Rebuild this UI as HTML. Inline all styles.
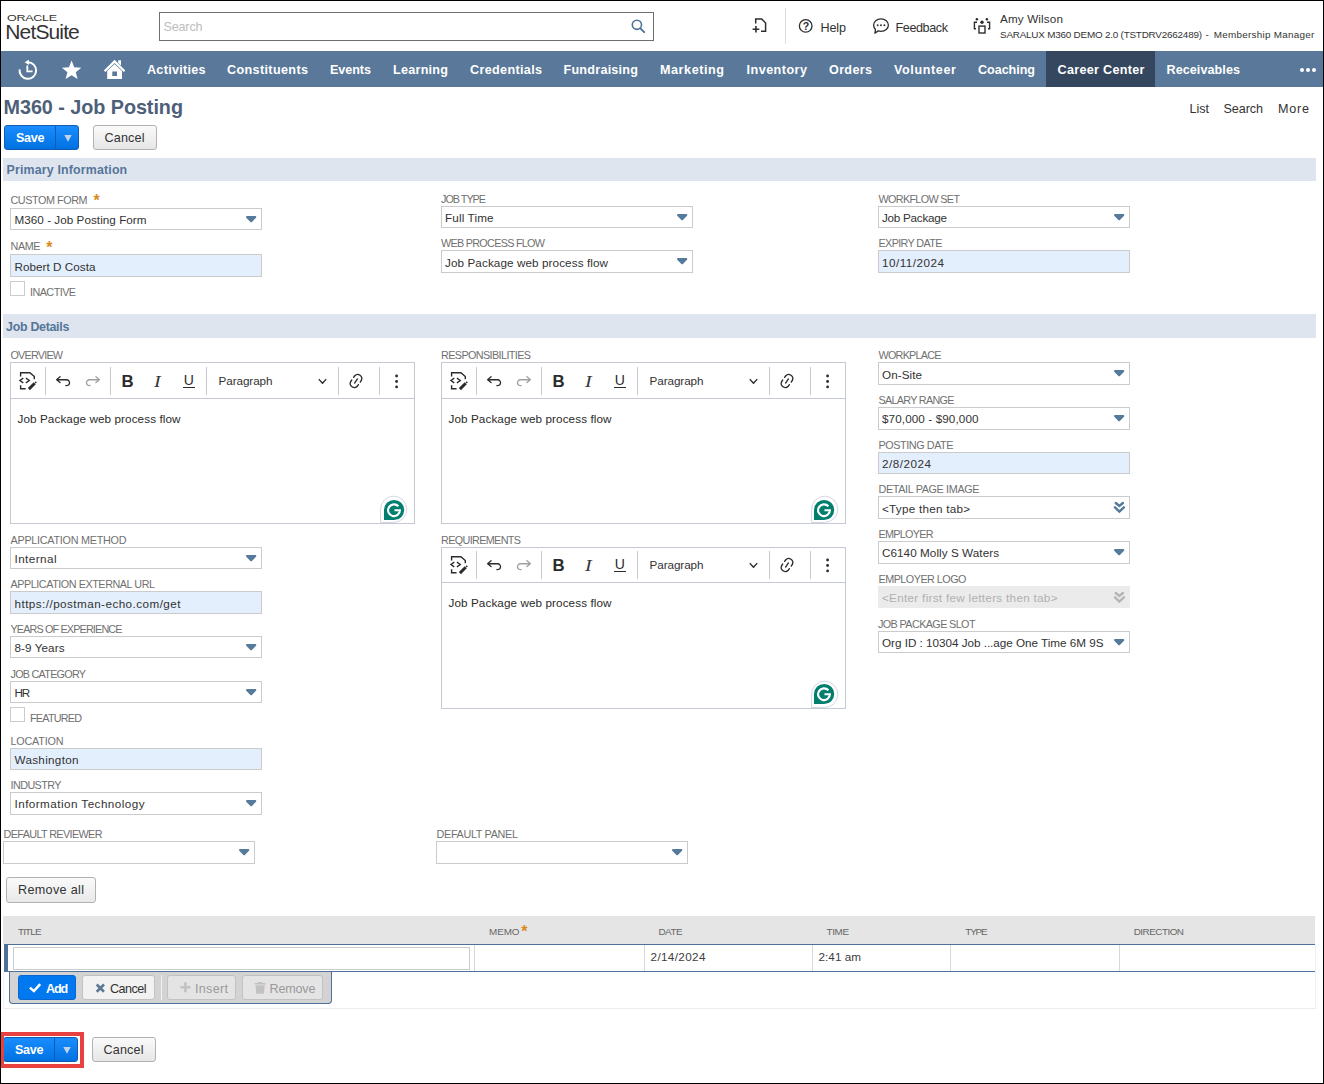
<!DOCTYPE html>
<html lang="en"><head><meta charset="utf-8"><title>M360 - Job Posting - NetSuite</title>
<style>
html,body{margin:0;padding:0;background:#fff;}
body{width:1324px;height:1084px;overflow:hidden;font-family:"Liberation Sans",sans-serif;}
#page{position:relative;width:1324px;height:1084px;overflow:hidden;background:#fff;}
#page div,#page svg{position:absolute;box-sizing:border-box;}
span.t{position:absolute;white-space:pre;line-height:normal;}
#frame{left:0;top:0;width:1324px;height:1084px;border:1px solid #000;pointer-events:none;}
.sel{border:1px solid #cbcbcb;background:#fff;}
.inp{border:1px solid #cbcbcb;background:#e4effd;}
.dis{background:#ebebeb;}
.cb{border:1px solid #cccccc;background:#fff;}
.band{background:#dfe5ee;}
.ed{border:1px solid #c4c9d4;background:#fff;}
.edsep{background:#c4c9d4;width:1px;}

</style></head>
<body>
<div id="page">
<div style="left:159px;top:12px;width:495px;height:29px;border:1px solid #6e6e6e;background:#fff;"></div>
<div style="left:785px;top:8px;width:1px;height:36px;background:#dcdcdc;"></div>
<div style="left:1px;top:51px;width:1322px;height:36px;background:#5a7899;"></div>
<div style="left:1046px;top:51px;width:109px;height:36px;background:#35475f;"></div>
<div style="left:1300px;top:67.5px;width:4px;height:4px;background:#fff;border-radius:2px;"></div>
<div style="left:1306px;top:67.5px;width:4px;height:4px;background:#fff;border-radius:2px;"></div>
<div style="left:1312px;top:67.5px;width:4px;height:4px;background:#fff;border-radius:2px;"></div>
<svg style="left:17px;top:57px" width="24" height="25" viewBox="17 57 24 25" fill="none" stroke="#fff">
<path d="M19.6 69.3A8.3 8.3 0 1 0 27.6 62.2" stroke-width="2"/>
<path d="M28.9 59.7L24.6 62.3L28.9 64.9Z" fill="#fff" stroke="none"/>
<path d="M27.3 65.6V71.3H32.6" stroke-width="1.8"/></svg>
<svg style="left:60px;top:58px" width="24" height="24" viewBox="60 58 24 24"><path d="M71.6 60.6L74.2 67.3L81.3 67.7L75.8 72.2L77.6 79.1L71.6 75.2L65.6 79.1L67.4 72.2L61.9 67.7L69 67.3Z" fill="#fff"/></svg>
<svg style="left:102px;top:58px" width="26" height="24" viewBox="102 58 26 24">
<path d="M104.6 71.2L114.6 61.4L124.6 71.2" fill="none" stroke="#fff" stroke-width="2.3" stroke-linejoin="miter"/>
<path d="M118.2 60.2H121V65.6L118.2 62.8Z" fill="#fff"/>
<path d="M107.2 71L114.6 63.9L122 71V79H107.2ZM112.3 71.5V76.1H117V71.5Z" fill="#fff" fill-rule="evenodd"/></svg>
<svg style="left:629px;top:17px" width="18" height="18" viewBox="629 17 18 18" fill="none" stroke="#50739a" stroke-linecap="round">
<circle cx="636.9" cy="24.8" r="4.6" stroke-width="1.6"/><path d="M640.6 28.6L644.2 32.1" stroke-width="2"/></svg>
<svg style="left:750px;top:15px" width="20" height="20" viewBox="750 15 20 20" fill="none" stroke="#2e2e2e" stroke-width="1.5">
<path d="M755.7 23.6V18.9H761.7L765.6 23V31.3H761"/><path d="M752.6 29.2H759.3M755.95 25.9V32.6" stroke-width="1.6"/></svg>
<svg style="left:797px;top:17px" width="18" height="18" viewBox="797 17 18 18"><circle cx="805.7" cy="25.9" r="6.3" fill="none" stroke="#2e2e2e" stroke-width="1.3"/></svg>
<svg style="left:871px;top:16px" width="20" height="20" viewBox="871 16 20 20">
<path d="M881 18.9c4.2 0 7.4 2.7 7.4 6.2s-3.200 6.200-7.400 6.200c-1 0-1.900-.100-2.800-.400l-3.300 2.300.600-3.600c-1.200-1.100-1.900-2.700-1.900-4.500 0-3.500 3.200-6.200 7.400-6.200z" fill="none" stroke="#2e2e2e" stroke-width="1.3" stroke-linejoin="round"/>
<circle cx="877.7" cy="25.3" r="0.95" fill="#2e2e2e"/><circle cx="881" cy="25.3" r="0.95" fill="#2e2e2e"/><circle cx="884.4" cy="25.3" r="0.95" fill="#2e2e2e"/></svg>
<svg style="left:972px;top:16px" width="20" height="20" viewBox="972 16 20 20" fill="none" stroke="#2e2e2e" stroke-width="1.4">
<circle cx="976.9" cy="19.3" r="1.25" fill="#2e2e2e" stroke="none"/><circle cx="986.9" cy="19.3" r="1.25" fill="#2e2e2e" stroke="none"/><circle cx="982" cy="22.2" r="1.7" fill="#2e2e2e" stroke="none"/>
<path d="M977 22.2H974.4V28.7H976"/><path d="M987 22.2H989.6V28.7H988"/><rect x="979" y="26.1" width="6" height="6.9"/></svg>
<div style="left:4px;top:125px;width:75px;height:25px;border:1px solid #125ab2;border-radius:3px;background:linear-gradient(#1a8dff,#0071e0);"></div>
<div style="left:55px;top:126px;width:1px;height:23px;background:#125ab2;"></div>
<svg style="left:64px;top:135px" width="8" height="7" viewBox="0 0 8 7"><path d="M0.3 0H7.7L4 6.8Z" fill="#c3d2e6"/></svg>
<div style="left:93px;top:125px;width:64px;height:25px;border:1px solid #b2b2b2;border-radius:3px;background:linear-gradient(#fafafa,#e6e6e6);"></div>
<div class="band" style="left:3px;top:158px;width:1313px;height:23px;"></div>
<div class="band" style="left:3px;top:314px;width:1313px;height:24px;"></div>
<div class="sel" style="left:10px;top:208px;width:252px;height:22px"></div>
<svg style="left:245.8px;top:215.7px" width="11" height="7" viewBox="0 0 11 7"><path d="M1 0H9.300Q10.300 0 10.300 0.900Q10.300 1.500 9.800 2L5.950 5.900Q5.150 6.700 4.350 5.900L0.500 2Q0 1.500 0 0.900Q0 0 1 0Z" fill="#567a9b"/></svg>
<div class="inp" style="left:10px;top:254px;width:252px;height:23px"></div>
<div class="cb" style="left:10px;top:281px;width:15px;height:15px"></div>
<div class="sel" style="left:441px;top:206px;width:252px;height:22px"></div>
<svg style="left:676.8px;top:213.7px" width="11" height="7" viewBox="0 0 11 7"><path d="M1 0H9.300Q10.300 0 10.300 0.900Q10.300 1.500 9.800 2L5.950 5.900Q5.150 6.700 4.350 5.900L0.500 2Q0 1.500 0 0.900Q0 0 1 0Z" fill="#567a9b"/></svg>
<div class="sel" style="left:441px;top:250px;width:252px;height:23px"></div>
<svg style="left:676.8px;top:257.7px" width="11" height="7" viewBox="0 0 11 7"><path d="M1 0H9.300Q10.300 0 10.300 0.900Q10.300 1.500 9.800 2L5.950 5.900Q5.150 6.700 4.350 5.900L0.500 2Q0 1.500 0 0.900Q0 0 1 0Z" fill="#567a9b"/></svg>
<div class="sel" style="left:878px;top:206px;width:252px;height:22px"></div>
<svg style="left:1113.8px;top:213.7px" width="11" height="7" viewBox="0 0 11 7"><path d="M1 0H9.300Q10.300 0 10.300 0.900Q10.300 1.500 9.800 2L5.950 5.900Q5.150 6.700 4.350 5.900L0.500 2Q0 1.500 0 0.900Q0 0 1 0Z" fill="#567a9b"/></svg>
<div class="inp" style="left:878px;top:250px;width:252px;height:23px"></div>
<div class="sel" style="left:10px;top:547px;width:252px;height:22px"></div>
<svg style="left:245.8px;top:554.7px" width="11" height="7" viewBox="0 0 11 7"><path d="M1 0H9.300Q10.300 0 10.300 0.900Q10.300 1.500 9.800 2L5.950 5.900Q5.150 6.700 4.350 5.900L0.500 2Q0 1.500 0 0.900Q0 0 1 0Z" fill="#567a9b"/></svg>
<div class="inp" style="left:10px;top:591px;width:252px;height:23px"></div>
<div class="sel" style="left:10px;top:636px;width:252px;height:22px"></div>
<svg style="left:245.8px;top:643.7px" width="11" height="7" viewBox="0 0 11 7"><path d="M1 0H9.300Q10.300 0 10.300 0.900Q10.300 1.500 9.800 2L5.950 5.900Q5.150 6.700 4.350 5.900L0.500 2Q0 1.500 0 0.900Q0 0 1 0Z" fill="#567a9b"/></svg>
<div class="sel" style="left:10px;top:681px;width:252px;height:22px"></div>
<svg style="left:245.8px;top:688.7px" width="11" height="7" viewBox="0 0 11 7"><path d="M1 0H9.300Q10.300 0 10.300 0.900Q10.300 1.500 9.800 2L5.950 5.900Q5.150 6.700 4.350 5.900L0.500 2Q0 1.500 0 0.900Q0 0 1 0Z" fill="#567a9b"/></svg>
<div class="cb" style="left:10px;top:707px;width:15px;height:15px"></div>
<div class="inp" style="left:10px;top:748px;width:252px;height:22px"></div>
<div class="sel" style="left:10px;top:792px;width:252px;height:23px"></div>
<svg style="left:245.8px;top:799.7px" width="11" height="7" viewBox="0 0 11 7"><path d="M1 0H9.300Q10.300 0 10.300 0.900Q10.300 1.500 9.800 2L5.950 5.900Q5.150 6.700 4.350 5.900L0.500 2Q0 1.500 0 0.900Q0 0 1 0Z" fill="#567a9b"/></svg>
<div class="sel" style="left:878px;top:362px;width:252px;height:23px"></div>
<svg style="left:1113.8px;top:369.7px" width="11" height="7" viewBox="0 0 11 7"><path d="M1 0H9.300Q10.300 0 10.300 0.900Q10.300 1.500 9.800 2L5.950 5.900Q5.150 6.700 4.350 5.900L0.500 2Q0 1.500 0 0.900Q0 0 1 0Z" fill="#567a9b"/></svg>
<div class="sel" style="left:878px;top:407px;width:252px;height:23px"></div>
<svg style="left:1113.8px;top:414.7px" width="11" height="7" viewBox="0 0 11 7"><path d="M1 0H9.300Q10.300 0 10.300 0.900Q10.300 1.500 9.800 2L5.950 5.900Q5.150 6.700 4.350 5.900L0.500 2Q0 1.500 0 0.900Q0 0 1 0Z" fill="#567a9b"/></svg>
<div class="inp" style="left:878px;top:452px;width:252px;height:22px"></div>
<div class="sel" style="left:878px;top:496px;width:252px;height:23px"></div>
<svg style="left:1113px;top:501px" width="13" height="13" viewBox="0 0 13 13"><path d="M2.75 2L6.35 5L9.9 2" fill="none" stroke="#567a9b" stroke-width="2.4" stroke-linecap="round"/><path d="M2 6.3L6.35 10.6L10.9 6.3" fill="none" stroke="#567a9b" stroke-width="2.4" stroke-linecap="round"/></svg>
<div class="sel" style="left:878px;top:541px;width:252px;height:23px"></div>
<svg style="left:1113.8px;top:548.7px" width="11" height="7" viewBox="0 0 11 7"><path d="M1 0H9.300Q10.300 0 10.300 0.900Q10.300 1.500 9.800 2L5.950 5.900Q5.150 6.700 4.350 5.900L0.500 2Q0 1.500 0 0.900Q0 0 1 0Z" fill="#567a9b"/></svg>
<div class="dis" style="left:878px;top:586px;width:252px;height:22px"></div>
<svg style="left:1113px;top:591px" width="13" height="13" viewBox="0 0 13 13"><path d="M2.75 2L6.35 5L9.9 2" fill="none" stroke="#b5b5b5" stroke-width="2.4" stroke-linecap="round"/><path d="M2 6.3L6.35 10.6L10.9 6.3" fill="none" stroke="#b5b5b5" stroke-width="2.4" stroke-linecap="round"/></svg>
<div class="sel" style="left:878px;top:631px;width:252px;height:22px"></div>
<svg style="left:1113.8px;top:638.7px" width="11" height="7" viewBox="0 0 11 7"><path d="M1 0H9.300Q10.300 0 10.300 0.900Q10.300 1.500 9.800 2L5.950 5.900Q5.150 6.700 4.350 5.900L0.500 2Q0 1.500 0 0.900Q0 0 1 0Z" fill="#567a9b"/></svg>
<div class="sel" style="left:3px;top:841px;width:252px;height:23px"></div>
<svg style="left:238.8px;top:848.7px" width="11" height="7" viewBox="0 0 11 7"><path d="M1 0H9.300Q10.300 0 10.300 0.900Q10.300 1.500 9.800 2L5.950 5.900Q5.150 6.700 4.350 5.900L0.500 2Q0 1.500 0 0.900Q0 0 1 0Z" fill="#567a9b"/></svg>
<div class="sel" style="left:436px;top:841px;width:252px;height:23px"></div>
<svg style="left:671.8px;top:848.7px" width="11" height="7" viewBox="0 0 11 7"><path d="M1 0H9.300Q10.300 0 10.300 0.900Q10.300 1.500 9.800 2L5.950 5.900Q5.150 6.700 4.350 5.900L0.500 2Q0 1.500 0 0.900Q0 0 1 0Z" fill="#567a9b"/></svg>
<div style="left:6px;top:877px;width:90px;height:26px;border:1px solid #b2b2b2;border-radius:3px;background:linear-gradient(#fafafa,#e8e8e8);"></div>
<div class="ed" style="left:10px;top:362px;width:405px;height:162px"></div>
<div style="left:11px;top:398px;width:403px;height:1px;background:#c4c9d4;"></div>
<div style="left:45px;top:367px;width:1px;height:28px;background:#c4c9d4;"></div>
<div style="left:110px;top:367px;width:1px;height:28px;background:#c4c9d4;"></div>
<div style="left:206px;top:367px;width:1px;height:28px;background:#c4c9d4;"></div>
<div style="left:338px;top:367px;width:1px;height:28px;background:#c4c9d4;"></div>
<div style="left:379px;top:367px;width:1px;height:28px;background:#c4c9d4;"></div>
<svg style="left:18px;top:370px" width="20" height="22" viewBox="8 8 20 22" fill="none" stroke="#2b2b2b" stroke-width="1.4"><path d="M10.6 14.600V10.700H19.900L24.300 14.600V17.200"/><path d="M10.600 23.300V26.800H15.600"/><path d="M13.300 16.100L9.900 18.500L13.300 20.900M15.900 16.100L19.300 18.500L15.900 20.900" stroke-width="1.300"/><path d="M18.900 27.100L24.700 21.300" stroke-width="2.900"/><path d="M25.200 19.900L26.300 21" stroke-width="1.500"/></svg>
<svg style="left:54px;top:371.5px" width="18" height="18" viewBox="0 0 20 20"><path d="m5.042 9.367 2.189 1.837a.75.75 0 0 1-.965 1.149l-3.788-3.180a.747.747 0 0 1-.21-.284.75.75 0 0 1 .17-.945L6.230 4.762a.75.75 0 1 1 .964 1.150L4.863 7.866h8.917A.75.75 0 0 1 14 7.900a4 4 0 1 1-1.477 7.718l.344-1.489a2.500 2.500 0 1 0 1.094-4.730l.008-.032H5.042z" fill="#2b2b2b"/></svg>
<svg style="left:84px;top:371.5px" width="18" height="18" viewBox="0 0 20 20"><path d="m14.958 9.367-2.189 1.837a.75.75 0 0 0 .965 1.149l3.788-3.180a.747.747 0 0 0 .21-.284.75.75 0 0 0-.17-.945L13.770 4.762a.75.75 0 1 0-.964 1.150l2.331 1.955H6.220A.75.75 0 0 0 6 7.900a4 4 0 1 0 1.477 7.718l-.344-1.489A2.500 2.500 0 1 1 6.039 9.400l-.008-.032h8.927z" fill="#a0a0a0"/></svg>
<div style="left:182.6px;top:386.7px;width:12.4px;height:1.3px;background:#2b2b2b;"></div>
<svg style="left:317px;top:377px" width="11" height="8" viewBox="0 0 11 8"><path d="M2.200 2.600L5.500 6.300L8.800 2.600" fill="none" stroke="#2b2b2b" stroke-width="1.400" stroke-linecap="round" stroke-linejoin="round"/></svg>
<svg style="left:347.3px;top:372px" width="18" height="18" viewBox="0 0 20 20"><path d="m11.077 15 .991-1.416a.75.75 0 1 1 1.229.86l-1.148 1.640a.748.748 0 0 1-.217.206 5.251 5.251 0 0 1-8.503-5.955.741.741 0 0 1 .12-.274l1.147-1.639a.75.75 0 1 1 1.228.86L4.933 10.7l.006.003a3.750 3.750 0 0 0 6.132 4.294l.006.004zm5.494-5.335a.748.748 0 0 1-.12.274l-1.147 1.639a.75.75 0 1 1-1.228-.86l.86-1.230a3.750 3.750 0 0 0-6.144-4.301l-.86 1.229a.75.75 0 0 1-1.229-.86l1.148-1.640a.748.748 0 0 1 .217-.206 5.251 5.251 0 0 1 8.503 5.955zm-4.563-2.532a.75.75 0 0 1 .184 1.045l-3.155 4.505a.75.75 0 1 1-1.229-.86l3.155-4.506a.75.75 0 0 1 1.045-.184z" fill="#2b2b2b"/></svg>
<svg style="left:393px;top:372px" width="8" height="20" viewBox="0 0 8 20" fill="#2b2b2b"><circle cx="3.600" cy="4" r="1.400"/><circle cx="3.600" cy="9.500" r="1.400"/><circle cx="3.600" cy="14.900" r="1.400"/></svg>
<svg style="left:379px;top:494px" width="30" height="30" viewBox="0 0 30 30"><path d="M1.600 28.500V15.300A13.100 13.100 0 1 1 14.700 28.400Z" fill="#fff" stroke="#d3d7e2" stroke-width="1"/><g transform="translate(0 0)"><path d="M5 26.100V16A10.100 10.100 0 1 1 15.100 26.100Z" fill="#027e6f"/><path d="M19.400 12.300A5.900 5.900 0 1 0 20.900 16.200H15.500" fill="none" stroke="#fff" stroke-width="2.100"/></g></svg>
<div class="ed" style="left:441px;top:362px;width:405px;height:162px"></div>
<div style="left:442px;top:398px;width:403px;height:1px;background:#c4c9d4;"></div>
<div style="left:476px;top:367px;width:1px;height:28px;background:#c4c9d4;"></div>
<div style="left:541px;top:367px;width:1px;height:28px;background:#c4c9d4;"></div>
<div style="left:637px;top:367px;width:1px;height:28px;background:#c4c9d4;"></div>
<div style="left:769px;top:367px;width:1px;height:28px;background:#c4c9d4;"></div>
<div style="left:810px;top:367px;width:1px;height:28px;background:#c4c9d4;"></div>
<svg style="left:449px;top:370px" width="20" height="22" viewBox="8 8 20 22" fill="none" stroke="#2b2b2b" stroke-width="1.4"><path d="M10.6 14.600V10.700H19.900L24.300 14.600V17.200"/><path d="M10.600 23.300V26.800H15.600"/><path d="M13.300 16.100L9.900 18.500L13.300 20.900M15.900 16.100L19.300 18.500L15.900 20.900" stroke-width="1.300"/><path d="M18.900 27.100L24.700 21.300" stroke-width="2.900"/><path d="M25.200 19.900L26.300 21" stroke-width="1.500"/></svg>
<svg style="left:485px;top:371.5px" width="18" height="18" viewBox="0 0 20 20"><path d="m5.042 9.367 2.189 1.837a.75.75 0 0 1-.965 1.149l-3.788-3.180a.747.747 0 0 1-.21-.284.75.75 0 0 1 .17-.945L6.230 4.762a.75.75 0 1 1 .964 1.150L4.863 7.866h8.917A.75.75 0 0 1 14 7.900a4 4 0 1 1-1.477 7.718l.344-1.489a2.500 2.500 0 1 0 1.094-4.730l.008-.032H5.042z" fill="#2b2b2b"/></svg>
<svg style="left:515px;top:371.5px" width="18" height="18" viewBox="0 0 20 20"><path d="m14.958 9.367-2.189 1.837a.75.75 0 0 0 .965 1.149l3.788-3.180a.747.747 0 0 0 .21-.284.75.75 0 0 0-.17-.945L13.770 4.762a.75.75 0 1 0-.964 1.150l2.331 1.955H6.220A.75.75 0 0 0 6 7.900a4 4 0 1 0 1.477 7.718l-.344-1.489A2.500 2.500 0 1 1 6.039 9.400l-.008-.032h8.927z" fill="#a0a0a0"/></svg>
<div style="left:613.6px;top:386.7px;width:12.4px;height:1.3px;background:#2b2b2b;"></div>
<svg style="left:748px;top:377px" width="11" height="8" viewBox="0 0 11 8"><path d="M2.200 2.600L5.500 6.300L8.800 2.600" fill="none" stroke="#2b2b2b" stroke-width="1.400" stroke-linecap="round" stroke-linejoin="round"/></svg>
<svg style="left:778.3px;top:372px" width="18" height="18" viewBox="0 0 20 20"><path d="m11.077 15 .991-1.416a.75.75 0 1 1 1.229.86l-1.148 1.640a.748.748 0 0 1-.217.206 5.251 5.251 0 0 1-8.503-5.955.741.741 0 0 1 .12-.274l1.147-1.639a.75.75 0 1 1 1.228.86L4.933 10.7l.006.003a3.750 3.750 0 0 0 6.132 4.294l.006.004zm5.494-5.335a.748.748 0 0 1-.12.274l-1.147 1.639a.75.75 0 1 1-1.228-.86l.86-1.230a3.750 3.750 0 0 0-6.144-4.301l-.86 1.229a.75.75 0 0 1-1.229-.86l1.148-1.640a.748.748 0 0 1 .217-.206 5.251 5.251 0 0 1 8.503 5.955zm-4.563-2.532a.75.75 0 0 1 .184 1.045l-3.155 4.505a.75.75 0 1 1-1.229-.86l3.155-4.506a.75.75 0 0 1 1.045-.184z" fill="#2b2b2b"/></svg>
<svg style="left:824px;top:372px" width="8" height="20" viewBox="0 0 8 20" fill="#2b2b2b"><circle cx="3.600" cy="4" r="1.400"/><circle cx="3.600" cy="9.500" r="1.400"/><circle cx="3.600" cy="14.900" r="1.400"/></svg>
<svg style="left:810px;top:494px" width="30" height="30" viewBox="0 0 30 30"><path d="M1.600 28.500V15.300A13.100 13.100 0 1 1 14.700 28.400Z" fill="#fff" stroke="#d3d7e2" stroke-width="1"/><g transform="translate(-1 0)"><path d="M5 26.100V16A10.100 10.100 0 1 1 15.100 26.100Z" fill="#027e6f"/><path d="M19.400 12.300A5.900 5.900 0 1 0 20.900 16.200H15.500" fill="none" stroke="#fff" stroke-width="2.100"/></g></svg>
<div class="ed" style="left:441px;top:547px;width:405px;height:162px"></div>
<div style="left:442px;top:582px;width:403px;height:1px;background:#c4c9d4;"></div>
<div style="left:476px;top:551px;width:1px;height:28px;background:#c4c9d4;"></div>
<div style="left:541px;top:551px;width:1px;height:28px;background:#c4c9d4;"></div>
<div style="left:637px;top:551px;width:1px;height:28px;background:#c4c9d4;"></div>
<div style="left:769px;top:551px;width:1px;height:28px;background:#c4c9d4;"></div>
<div style="left:810px;top:551px;width:1px;height:28px;background:#c4c9d4;"></div>
<svg style="left:449px;top:554px" width="20" height="22" viewBox="8 8 20 22" fill="none" stroke="#2b2b2b" stroke-width="1.4"><path d="M10.6 14.600V10.700H19.900L24.300 14.600V17.200"/><path d="M10.600 23.300V26.800H15.600"/><path d="M13.300 16.100L9.900 18.500L13.300 20.900M15.900 16.100L19.300 18.500L15.900 20.900" stroke-width="1.300"/><path d="M18.900 27.100L24.700 21.300" stroke-width="2.900"/><path d="M25.200 19.900L26.300 21" stroke-width="1.500"/></svg>
<svg style="left:485px;top:555.5px" width="18" height="18" viewBox="0 0 20 20"><path d="m5.042 9.367 2.189 1.837a.75.75 0 0 1-.965 1.149l-3.788-3.180a.747.747 0 0 1-.21-.284.75.75 0 0 1 .17-.945L6.230 4.762a.75.75 0 1 1 .964 1.150L4.863 7.866h8.917A.75.75 0 0 1 14 7.900a4 4 0 1 1-1.477 7.718l.344-1.489a2.500 2.500 0 1 0 1.094-4.730l.008-.032H5.042z" fill="#2b2b2b"/></svg>
<svg style="left:515px;top:555.5px" width="18" height="18" viewBox="0 0 20 20"><path d="m14.958 9.367-2.189 1.837a.75.75 0 0 0 .965 1.149l3.788-3.180a.747.747 0 0 0 .21-.284.75.75 0 0 0-.17-.945L13.770 4.762a.75.75 0 1 0-.964 1.150l2.331 1.955H6.220A.75.75 0 0 0 6 7.900a4 4 0 1 0 1.477 7.718l-.344-1.489A2.500 2.500 0 1 1 6.039 9.400l-.008-.032h8.927z" fill="#a0a0a0"/></svg>
<div style="left:613.6px;top:570.7px;width:12.4px;height:1.3px;background:#2b2b2b;"></div>
<svg style="left:748px;top:561px" width="11" height="8" viewBox="0 0 11 8"><path d="M2.200 2.600L5.500 6.300L8.800 2.600" fill="none" stroke="#2b2b2b" stroke-width="1.400" stroke-linecap="round" stroke-linejoin="round"/></svg>
<svg style="left:778.3px;top:556px" width="18" height="18" viewBox="0 0 20 20"><path d="m11.077 15 .991-1.416a.75.75 0 1 1 1.229.86l-1.148 1.640a.748.748 0 0 1-.217.206 5.251 5.251 0 0 1-8.503-5.955.741.741 0 0 1 .12-.274l1.147-1.639a.75.75 0 1 1 1.228.86L4.933 10.7l.006.003a3.750 3.750 0 0 0 6.132 4.294l.006.004zm5.494-5.335a.748.748 0 0 1-.12.274l-1.147 1.639a.75.75 0 1 1-1.228-.86l.86-1.230a3.750 3.750 0 0 0-6.144-4.301l-.86 1.229a.75.75 0 0 1-1.229-.86l1.148-1.640a.748.748 0 0 1 .217-.206 5.251 5.251 0 0 1 8.503 5.955zm-4.563-2.532a.75.75 0 0 1 .184 1.045l-3.155 4.505a.75.75 0 1 1-1.229-.86l3.155-4.506a.75.75 0 0 1 1.045-.184z" fill="#2b2b2b"/></svg>
<svg style="left:824px;top:556px" width="8" height="20" viewBox="0 0 8 20" fill="#2b2b2b"><circle cx="3.600" cy="4" r="1.400"/><circle cx="3.600" cy="9.500" r="1.400"/><circle cx="3.600" cy="14.900" r="1.400"/></svg>
<svg style="left:810px;top:679px" width="30" height="30" viewBox="0 0 30 30"><path d="M1.600 28.500V15.300A13.100 13.100 0 1 1 14.700 28.400Z" fill="#fff" stroke="#d3d7e2" stroke-width="1"/><g transform="translate(-1 -1)"><path d="M5 26.100V16A10.100 10.100 0 1 1 15.100 26.100Z" fill="#027e6f"/><path d="M19.400 12.300A5.900 5.900 0 1 0 20.900 16.200H15.500" fill="none" stroke="#fff" stroke-width="2.100"/></g></svg>
<div style="left:3px;top:916px;width:1312px;height:28px;background:#e5e5e5;"></div>
<div style="left:4px;top:944px;width:1311px;height:28px;border-top:1px solid #4f7099;border-bottom:1px solid #4f7099;background:#fff;"></div>
<div style="left:4px;top:944px;width:4px;height:28px;background:#4f7099;"></div>
<div style="left:474px;top:945px;width:1px;height:26px;background:#d8d8d8;"></div>
<div style="left:644px;top:945px;width:1px;height:26px;background:#d8d8d8;"></div>
<div style="left:812px;top:945px;width:1px;height:26px;background:#d8d8d8;"></div>
<div style="left:950px;top:945px;width:1px;height:26px;background:#d8d8d8;"></div>
<div style="left:1119px;top:945px;width:1px;height:26px;background:#d8d8d8;"></div>
<div style="left:13px;top:947px;width:457px;height:23px;border:1px solid #cbcbcb;background:#fff;"></div>
<div style="left:9px;top:972px;width:323px;height:32px;background:#d3d3d3;border:1px solid #4f7099;border-top:none;border-radius:0 0 4px 4px;"></div>
<div style="left:18px;top:975px;width:58px;height:25px;background:#0078f0;border:1px solid #0a66d0;border-radius:3px;"></div>
<div style="left:81.5px;top:975px;width:73px;height:25px;background:#f2f2f2;border:1px solid #c2c2c2;border-radius:3px;"></div>
<div style="left:161px;top:975px;width:1px;height:25px;background:#f0f0f0;"></div>
<div style="left:167px;top:975px;width:69px;height:25px;background:#e4e4e4;border:1px solid #c2c2c2;border-radius:3px;"></div>
<div style="left:242px;top:975px;width:81px;height:25px;background:#e4e4e4;border:1px solid #c2c2c2;border-radius:3px;"></div>
<div style="left:3px;top:1008px;width:1313px;height:1px;background:#e9edf1;"></div>
<div style="left:1315px;top:944px;width:1px;height:65px;background:#eef1f4;"></div>
<div style="left:3px;top:972px;width:1px;height:37px;background:#eef1f4;"></div>
<svg style="left:28px;top:982px" width="15" height="12" viewBox="28 982 15 12"><path d="M29.9 987.600L33.9 991.100L40.200 984.200" fill="none" stroke="#fff" stroke-width="2.500"/></svg>
<svg style="left:94px;top:982px" width="13" height="12" viewBox="94 982 13 12"><path d="M96.700 984.500L104 991.700M104 984.500L96.700 991.700" fill="none" stroke="#5d7a93" stroke-width="2.600"/></svg>
<svg style="left:179px;top:981px" width="13" height="13" viewBox="179 981 13 13"><path d="M185.450 982.200V992.200M180.500 987.200H190.400" fill="none" stroke="#c2c2c2" stroke-width="2.600"/></svg>
<svg style="left:253px;top:980px" width="15" height="15" viewBox="253 980 15 15"><path d="M254.500 983.100H265.700V984.600H254.500ZM257.800 982H262.400V983.200H257.800ZM255.500 985.300H264.700L263.900 993.800H256.300Z" fill="#c2c2c2"/></svg>
<div style="left:3px;top:1037px;width:75px;height:25px;border:1px solid #125ab2;border-radius:3px;background:linear-gradient(#1a8dff,#0071e0);"></div>
<div style="left:54px;top:1038px;width:1px;height:23px;background:#125ab2;"></div>
<svg style="left:63px;top:1047px" width="8" height="7" viewBox="0 0 8 7"><path d="M0.3 0H7.7L4 6.8Z" fill="#c3d2e6"/></svg>
<div style="left:92px;top:1037px;width:64px;height:25px;border:1px solid #b2b2b2;border-radius:3px;background:linear-gradient(#fafafa,#e6e6e6);"></div>
<div style="left:1px;top:1032px;width:83px;height:36px;border:4px solid #e8413f;border-left-width:3px;"></div>
<span class="t " style="left:6.8px;font-size:9.4px;color:#333;top:11.9px;transform-origin:0 50%;transform:scaleX(1.335);letter-spacing:-0.2px;">ORACLE</span>
<span class="t " style="left:5.3px;font-size:21px;color:#333;top:20px;letter-spacing:-0.864px;">NetSuite</span>
<span class="t " style="left:163.5px;font-size:12.6px;color:#bdbdbd;top:19.5px;letter-spacing:-0.181px;">Search</span>
<span class="t " style="left:820.5px;font-size:12.6px;color:#333;top:20.5px;letter-spacing:-0.135px;">Help</span>
<span class="t " style="left:895.5px;font-size:12.6px;color:#333;top:20.5px;letter-spacing:-0.402px;">Feedback</span>
<span class="t " style="left:1000px;font-size:11.7px;color:#333;top:12px;letter-spacing:0.144px;">Amy Wilson</span>
<span class="t " style="left:1000px;font-size:9.9px;color:#333;top:29px;letter-spacing:-0.208px;">SARALUX M360 DEMO 2.0 (TSTDRV2662489)</span>
<span class="t " style="left:1205.6px;font-size:9.9px;color:#333;top:29px;">-</span>
<span class="t " style="left:1213.8px;font-size:9.9px;color:#333;top:29px;letter-spacing:0.261px;">Membership Manager</span>
<span class="t " style="left:147px;font-size:12.6px;color:#fff;font-weight:700;top:63px;letter-spacing:0.278px;">Activities</span>
<span class="t " style="left:227px;font-size:12.6px;color:#fff;font-weight:700;top:63px;letter-spacing:0.366px;">Constituents</span>
<span class="t " style="left:330px;font-size:12.6px;color:#fff;font-weight:700;top:63px;letter-spacing:-0.062px;">Events</span>
<span class="t " style="left:393px;font-size:12.6px;color:#fff;font-weight:700;top:63px;letter-spacing:0.259px;">Learning</span>
<span class="t " style="left:470px;font-size:12.6px;color:#fff;font-weight:700;top:63px;letter-spacing:0.341px;">Credentials</span>
<span class="t " style="left:563.5px;font-size:12.6px;color:#fff;font-weight:700;top:63px;letter-spacing:0.242px;">Fundraising</span>
<span class="t " style="left:660px;font-size:12.6px;color:#fff;font-weight:700;top:63px;letter-spacing:0.564px;">Marketing</span>
<span class="t " style="left:746.5px;font-size:12.6px;color:#fff;font-weight:700;top:63px;letter-spacing:0.477px;">Inventory</span>
<span class="t " style="left:829px;font-size:12.6px;color:#fff;font-weight:700;top:63px;letter-spacing:0.338px;">Orders</span>
<span class="t " style="left:894px;font-size:12.6px;color:#fff;font-weight:700;top:63px;letter-spacing:0.605px;">Volunteer</span>
<span class="t " style="left:978px;font-size:12.6px;color:#fff;font-weight:700;top:63px;letter-spacing:-0.054px;">Coaching</span>
<span class="t " style="left:1057.5px;font-size:12.6px;color:#fff;font-weight:700;top:63px;letter-spacing:0.307px;">Career Center</span>
<span class="t " style="left:1166.5px;font-size:12.6px;color:#fff;font-weight:700;top:63px;letter-spacing:0.067px;">Receivables</span>
<span class="t " style="left:802.7px;font-size:10.6px;color:#2e2e2e;font-weight:700;top:19.7px;">?</span>
<span class="t " style="left:3.5px;font-size:19.8px;color:#4d5f79;font-weight:700;top:95.75px;letter-spacing:-0.045px;">M360 - Job Posting</span>
<span class="t " style="left:1189.5px;font-size:12.6px;color:#333;top:102px;letter-spacing:-0.036px;">List</span>
<span class="t " style="left:1223.5px;font-size:12.6px;color:#333;top:102px;letter-spacing:-0.081px;">Search</span>
<span class="t " style="left:1278px;font-size:12.6px;color:#333;top:102px;letter-spacing:0.766px;">More</span>
<span class="t " style="left:16px;font-size:12.6px;color:#fff;font-weight:700;top:131px;letter-spacing:-0.307px;">Save</span>
<span class="t " style="left:104.5px;font-size:12.6px;color:#333;top:131px;letter-spacing:0.159px;">Cancel</span>
<span class="t " style="left:6.6px;font-size:12.4px;color:#55759a;font-weight:700;top:163.2px;letter-spacing:0.158px;">Primary Information</span>
<span class="t " style="left:6.1px;font-size:12.4px;color:#55759a;font-weight:700;top:320.2px;letter-spacing:-0.291px;">Job Details</span>
<span class="t " style="left:10.5px;font-size:10.8px;color:#707070;top:194px;letter-spacing:-0.438px;">CUSTOM FORM</span>
<span class="t " style="left:93.6px;font-size:16px;color:#d98a1c;font-weight:700;top:191.6px;">*</span>
<span class="t " style="left:14.5px;font-size:11.7px;color:#323232;top:212.5px;letter-spacing:0.036px;">M360 - Job Posting Form</span>
<span class="t " style="left:10.5px;font-size:10.8px;color:#707070;top:240px;letter-spacing:-0.401px;">NAME</span>
<span class="t " style="left:46.3px;font-size:16px;color:#d98a1c;font-weight:700;top:238.6px;">*</span>
<span class="t " style="left:14.5px;font-size:11.7px;color:#323232;top:259.5px;letter-spacing:0.035px;">Robert D Costa</span>
<span class="t " style="left:30px;font-size:10.8px;color:#707070;top:286px;letter-spacing:-0.542px;">INACTIVE</span>
<span class="t " style="left:441px;font-size:10.8px;color:#707070;top:193px;letter-spacing:-1.002px;">JOB TYPE</span>
<span class="t " style="left:445.0px;font-size:11.7px;color:#323232;top:210.5px;letter-spacing:0.137px;">Full Time</span>
<span class="t " style="left:441px;font-size:10.8px;color:#707070;top:237px;letter-spacing:-0.706px;">WEB PROCESS FLOW</span>
<span class="t " style="left:445.0px;font-size:11.7px;color:#323232;top:255.5px;letter-spacing:0.094px;">Job Package web process flow</span>
<span class="t " style="left:878.5px;font-size:10.8px;color:#707070;top:193px;letter-spacing:-0.662px;">WORKFLOW SET</span>
<span class="t " style="left:882.0px;font-size:11.7px;color:#323232;top:210.5px;letter-spacing:-0.258px;">Job Package</span>
<span class="t " style="left:878.5px;font-size:10.8px;color:#707070;top:237px;letter-spacing:-0.622px;">EXPIRY DATE</span>
<span class="t " style="left:882.0px;font-size:11.7px;color:#323232;top:255.5px;letter-spacing:0.484px;">10/11/2024</span>
<span class="t " style="left:10.5px;font-size:10.8px;color:#707070;top:349px;letter-spacing:-0.786px;">OVERVIEW</span>
<span class="t " style="left:10.5px;font-size:10.8px;color:#707070;top:534px;letter-spacing:-0.258px;">APPLICATION METHOD</span>
<span class="t " style="left:14.5px;font-size:11.7px;color:#323232;top:551.5px;letter-spacing:0.431px;">Internal</span>
<span class="t " style="left:10.5px;font-size:10.8px;color:#707070;top:578px;letter-spacing:-0.448px;">APPLICATION EXTERNAL URL</span>
<span class="t " style="left:14.5px;font-size:11.7px;color:#323232;top:597px;letter-spacing:0.446px;">https://postman-echo.com/get</span>
<span class="t " style="left:10.5px;font-size:10.8px;color:#707070;top:623px;letter-spacing:-0.845px;">YEARS OF EXPERIENCE</span>
<span class="t " style="left:14.5px;font-size:11.7px;color:#323232;top:641px;letter-spacing:0.076px;">8-9 Years</span>
<span class="t " style="left:10.5px;font-size:10.8px;color:#707070;top:668px;letter-spacing:-0.736px;">JOB CATEGORY</span>
<span class="t " style="left:14.5px;font-size:11.7px;color:#323232;top:685.5px;letter-spacing:-1.200px;">HR</span>
<span class="t " style="left:30px;font-size:10.8px;color:#707070;top:712px;letter-spacing:-0.770px;">FEATURED</span>
<span class="t " style="left:10.5px;font-size:10.8px;color:#707070;top:735px;letter-spacing:-0.199px;">LOCATION</span>
<span class="t " style="left:14.5px;font-size:11.7px;color:#323232;top:753px;letter-spacing:0.300px;">Washington</span>
<span class="t " style="left:10.5px;font-size:10.8px;color:#707070;top:779px;letter-spacing:-0.571px;">INDUSTRY</span>
<span class="t " style="left:14.5px;font-size:11.7px;color:#323232;top:797px;letter-spacing:0.446px;">Information Technology</span>
<span class="t " style="left:441px;font-size:10.8px;color:#707070;top:349px;letter-spacing:-0.601px;">RESPONSIBILITIES</span>
<span class="t " style="left:441px;font-size:10.8px;color:#707070;top:534px;letter-spacing:-0.635px;">REQUIREMENTS</span>
<span class="t " style="left:878.5px;font-size:10.8px;color:#707070;top:349px;letter-spacing:-0.750px;">WORKPLACE</span>
<span class="t " style="left:882.0px;font-size:11.7px;color:#323232;top:367.5px;letter-spacing:0.062px;">On-Site</span>
<span class="t " style="left:878.5px;font-size:10.8px;color:#707070;top:394px;letter-spacing:-0.693px;">SALARY RANGE</span>
<span class="t " style="left:882.0px;font-size:11.7px;color:#323232;top:412px;letter-spacing:0.101px;">$70,000 - $90,000</span>
<span class="t " style="left:878.5px;font-size:10.8px;color:#707070;top:439px;letter-spacing:-0.418px;">POSTING DATE</span>
<span class="t " style="left:882.0px;font-size:11.7px;color:#323232;top:456.5px;letter-spacing:0.500px;">2/8/2024</span>
<span class="t " style="left:878.5px;font-size:10.8px;color:#707070;top:483px;letter-spacing:-0.350px;">DETAIL PAGE IMAGE</span>
<span class="t " style="left:882.0px;font-size:11.7px;color:#323232;top:501.5px;letter-spacing:0.251px;">&lt;Type then tab&gt;</span>
<span class="t " style="left:878.5px;font-size:10.8px;color:#707070;top:528px;letter-spacing:-0.714px;">EMPLOYER</span>
<span class="t " style="left:882.0px;font-size:11.7px;color:#323232;top:546px;letter-spacing:0.061px;">C6140 Molly S Waters</span>
<span class="t " style="left:878.5px;font-size:10.8px;color:#707070;top:573px;letter-spacing:-0.517px;">EMPLOYER LOGO</span>
<span class="t " style="left:882.0px;font-size:11.7px;color:#b0b0b0;top:591px;letter-spacing:0.298px;">&lt;Enter first few letters then tab&gt;</span>
<span class="t " style="left:878px;font-size:10.8px;color:#707070;top:618px;letter-spacing:-0.607px;">JOB PACKAGE SLOT</span>
<span class="t " style="left:882.0px;font-size:11.7px;color:#323232;top:636px;letter-spacing:-0.018px;">Org ID : 10304 Job ...age One Time 6M 9S</span>
<span class="t " style="left:3.5px;font-size:10.8px;color:#707070;top:828px;letter-spacing:-0.614px;">DEFAULT REVIEWER</span>
<span class="t " style="left:436.5px;font-size:10.8px;color:#707070;top:828px;letter-spacing:-0.310px;">DEFAULT PANEL</span>
<span class="t " style="left:18px;font-size:12.6px;color:#333;top:883px;letter-spacing:0.333px;">Remove all</span>
<span class="t " style="left:121.6px;font-size:16.8px;color:#2b2b2b;font-weight:700;top:371.9px;">B</span>
<span class="t " style="left:154.4px;font-size:17.4px;color:#383838;font-style:italic;font-family:'Liberation Serif',serif;top:370.9px;transform-origin:0 50%;transform:scaleX(1.15);">I</span>
<span class="t " style="left:183.7px;font-size:14px;color:#2b2b2b;top:371.8px;">U</span>
<span class="t " style="left:218.5px;font-size:11.7px;color:#333;top:374px;letter-spacing:-0.074px;">Paragraph</span>
<span class="t " style="left:17.5px;font-size:11.7px;color:#2b2b2b;top:412px;letter-spacing:0.094px;">Job Package web process flow</span>
<span class="t " style="left:552.6px;font-size:16.8px;color:#2b2b2b;font-weight:700;top:371.9px;">B</span>
<span class="t " style="left:585.4px;font-size:17.4px;color:#383838;font-style:italic;font-family:'Liberation Serif',serif;top:370.9px;transform-origin:0 50%;transform:scaleX(1.15);">I</span>
<span class="t " style="left:614.7px;font-size:14px;color:#2b2b2b;top:371.8px;">U</span>
<span class="t " style="left:649.5px;font-size:11.7px;color:#333;top:374px;letter-spacing:-0.074px;">Paragraph</span>
<span class="t " style="left:448.5px;font-size:11.7px;color:#2b2b2b;top:412px;letter-spacing:0.094px;">Job Package web process flow</span>
<span class="t " style="left:552.6px;font-size:16.8px;color:#2b2b2b;font-weight:700;top:555.9px;">B</span>
<span class="t " style="left:585.4px;font-size:17.4px;color:#383838;font-style:italic;font-family:'Liberation Serif',serif;top:554.9px;transform-origin:0 50%;transform:scaleX(1.15);">I</span>
<span class="t " style="left:614.7px;font-size:14px;color:#2b2b2b;top:555.8px;">U</span>
<span class="t " style="left:649.5px;font-size:11.7px;color:#333;top:558px;letter-spacing:-0.074px;">Paragraph</span>
<span class="t " style="left:448.5px;font-size:11.7px;color:#2b2b2b;top:596px;letter-spacing:0.094px;">Job Package web process flow</span>
<span class="t " style="left:18px;font-size:9.9px;color:#666;top:926px;letter-spacing:-0.848px;">TITLE</span>
<span class="t " style="left:489px;font-size:9.9px;color:#666;top:926px;letter-spacing:-0.078px;">MEMO</span>
<span class="t " style="left:658.5px;font-size:9.9px;color:#666;top:926px;letter-spacing:-0.536px;">DATE</span>
<span class="t " style="left:826.5px;font-size:9.9px;color:#666;top:926px;letter-spacing:-0.365px;">TIME</span>
<span class="t " style="left:965.3px;font-size:9.9px;color:#666;top:926px;letter-spacing:-1.200px;">TYPE</span>
<span class="t " style="left:1133.7px;font-size:9.9px;color:#666;top:926px;letter-spacing:-0.502px;">DIRECTION</span>
<span class="t " style="left:521.3px;font-size:16px;color:#d98a1c;font-weight:700;top:922.8px;">*</span>
<span class="t " style="left:650.5px;font-size:11.7px;color:#3d3d3d;top:950px;letter-spacing:0.375px;">2/14/2024</span>
<span class="t " style="left:818.5px;font-size:11.7px;color:#3d3d3d;top:950px;letter-spacing:0.044px;">2:41 am</span>
<span class="t " style="left:46px;font-size:12.6px;color:#fff;font-weight:700;top:981.5px;letter-spacing:-1.200px;">Add</span>
<span class="t " style="left:110px;font-size:12.6px;color:#333;top:981.5px;letter-spacing:-0.541px;">Cancel</span>
<span class="t " style="left:195px;font-size:12.6px;color:#9a9a9a;top:981.5px;letter-spacing:0.300px;">Insert</span>
<span class="t " style="left:269.5px;font-size:12.6px;color:#9a9a9a;top:981.5px;letter-spacing:-0.181px;">Remove</span>
<span class="t " style="left:15px;font-size:12.6px;color:#fff;font-weight:700;top:1043px;letter-spacing:-0.307px;">Save</span>
<span class="t " style="left:103.5px;font-size:12.6px;color:#333;top:1043px;letter-spacing:0.159px;">Cancel</span>
<div id="frame"></div>
</div>
</body></html>
